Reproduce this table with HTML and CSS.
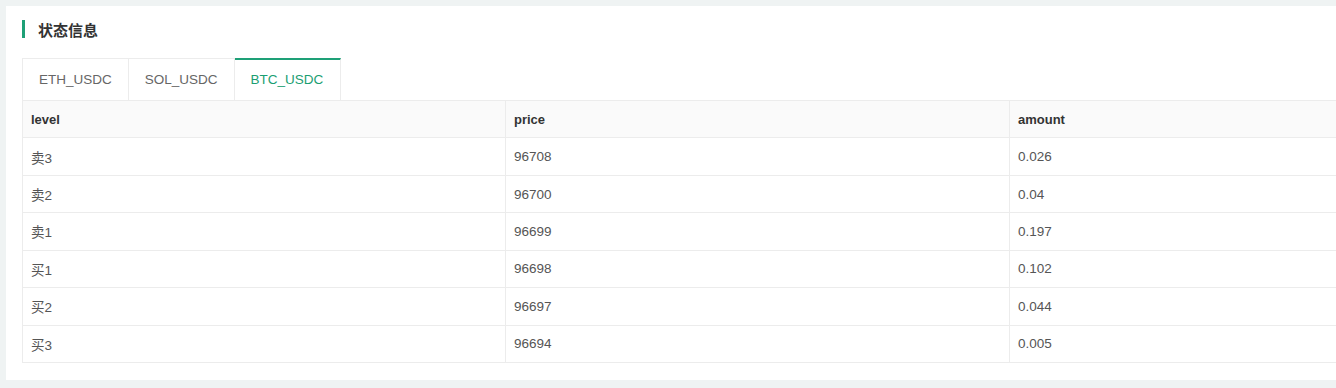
FILE: index.html
```html
<!DOCTYPE html>
<html lang="zh">
<head>
<meta charset="utf-8">
<link rel="stylesheet" href="styles.css">
</head>
<body>
<div class="card">
  <div class="title"><span class="bar"></span><span class="title-text">状态信息</span></div>
  <div class="tabs">
    <div class="tab">ETH_USDC</div>
    <div class="tab">SOL_USDC</div>
    <div class="tab active">BTC_USDC</div>
  </div>
  <table class="book">
    <colgroup><col class="c1"><col class="c2"><col class="c3"></colgroup>
    <thead>
      <tr><th>level</th><th>price</th><th>amount</th></tr>
    </thead>
    <tbody>
      <tr><td>卖3</td><td>96708</td><td>0.026</td></tr>
      <tr><td>卖2</td><td>96700</td><td>0.04</td></tr>
      <tr><td>卖1</td><td>96699</td><td>0.197</td></tr>
      <tr><td>买1</td><td>96698</td><td>0.102</td></tr>
      <tr><td>买2</td><td>96697</td><td>0.044</td></tr>
      <tr><td>买3</td><td>96694</td><td>0.005</td></tr>
    </tbody>
  </table>
</div>
</body>
</html>
```

FILE: styles.css
```css
html, body {
  margin: 0;
  padding: 0;
  overflow: hidden;
}
body {
  background: #eff3f3;
  font-family: "Liberation Sans", "Noto Sans CJK SC", sans-serif;
  color: #555;
  padding: 6px 0 0 6px;
  height: 388px;
  box-sizing: border-box;
}
.card {
  background: #fff;
  padding: 13px 0 17px 16px;
}
.title {
  display: flex;
  align-items: center;
  height: 20px;
}
.bar {
  width: 3px;
  height: 18px;
  background: #1ea077;
}
.title-text {
  margin-left: 13px;
  font-size: 15px;
  font-weight: bold;
  color: #333;
  font-family: "Noto Sans CJK SC", sans-serif;
}
.tabs {
  display: flex;
  margin-top: 19px;
}
.tab {
  height: 42px;
  line-height: 41px;
  padding: 0 16px;
  font-size: 13.5px;
  color: #666;
  border-top: 1px solid #ececec;
  border-right: 1px solid #ececec;
  box-sizing: border-box;
}
.tab:first-child {
  border-left: 1px solid #ececec;
}
.tab.active {
  color: #1b9e72;
  border-top: 2px solid #1ea077;
  line-height: 40px;
  padding: 0 16px 0 16px;
  min-width: 106px;
}
.book {
  width: 100%;
  border-collapse: collapse;
  table-layout: fixed;
  font-size: 13.5px;
}
.c1 { width: 483px; }
.c2 { width: 504px; }
.book th, .book td {
  border: 1px solid #ececec;
  padding: 0 8px;
  height: 37.43px;
  text-align: left;
  box-sizing: border-box;
}
.book th:last-child, .book td:last-child {
  border-right: none;
}
.book th {
  background: #fafafa;
  color: #333;
  font-weight: bold;
  font-size: 13px;
}
.book td {
  color: #555;
}
```
